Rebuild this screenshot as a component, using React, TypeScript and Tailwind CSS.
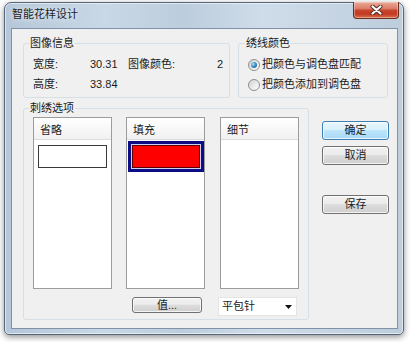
import React from "react";

const FONT = "font-['Liberation_Sans','Noto_Sans_CJK_SC',sans-serif]";

function Button({ label, primary = false, className = "" }: { label: string; primary?: boolean; className?: string }) {
  const skin = primary
    ? "border-[#3c7fb1] bg-[linear-gradient(#eaf6fd_0%,#d9f0fc_45%,#bee6fd_50%,#a7d9f5_100%)]"
    : "border-[#707070] bg-[linear-gradient(#f2f2f2_0%,#ebebeb_45%,#dddddd_50%,#cfcfcf_100%)]";
  return (
    <div
      className={`flex items-center justify-center rounded-[3px] border shadow-[inset_0_0_0_1px_rgba(255,255,255,0.75)] ${skin} ${className}`}
    >
      {label}
    </div>
  );
}

function Radio({ checked = false }: { checked?: boolean }) {
  return (
    <span className="flex h-[12px] w-[12px] shrink-0 items-center justify-center rounded-full border border-[#8f8f8f] bg-[linear-gradient(135deg,#d2d2d2,#ffffff)]">
      {checked && (
        <span className="h-[6px] w-[6px] rounded-full bg-[radial-gradient(circle_at_35%_35%,#b4e4fb_0%,#3d8fc4_45%,#1b4d7a_100%)]" />
      )}
    </span>
  );
}

function ListPanel({ title, children, className = "" }: { title: string; children?: React.ReactNode; className?: string }) {
  return (
    <div className={`flex h-[172px] w-[79px] flex-col border border-[#9c9c9c] bg-white ${className}`}>
      <div className="h-[22px] shrink-0 border-b border-[#dcdcdc] bg-[linear-gradient(#ffffff,#f1f1f1)] pl-[6px] pt-[6px]">
        {title}
      </div>
      {children}
    </div>
  );
}

function CloseButton() {
  return (
    <div className="-mt-[1px] mr-[4px] ml-auto flex h-[17px] w-[46px] items-center justify-center rounded-b-[4px] border border-t-0 border-[#6b2c22] bg-[linear-gradient(#eaa896_0%,#dc806b_40%,#c8452e_52%,#c23a22_75%,#d9714f_100%)] shadow-[inset_0_0_0_1px_rgba(255,255,255,0.35)]">
      <svg width="13" height="10" viewBox="0 0 13 10">
        <path d="M2.5 1.5 L10.5 8.5 M10.5 1.5 L2.5 8.5" stroke="#4a2a24" strokeWidth="4" strokeLinecap="round" />
        <path d="M2.5 1.5 L10.5 8.5 M10.5 1.5 L2.5 8.5" stroke="#ffffff" strokeWidth="2.2" strokeLinecap="round" />
      </svg>
    </div>
  );
}

export default function App() {
  return (
    <div className={`${FONT} h-[342px] w-[414px] overflow-hidden bg-white pt-[2px] text-[11px] leading-[13px] text-[#1b1b1b]`}>
      {/* window frame */}
      <div className="ml-[4px] flex h-[333px] w-[400px] flex-col rounded-t-[7px] rounded-b-[5px] border border-[#56667a] bg-[linear-gradient(90deg,#b4c6d8_0%,#c9d8e6_25%,#bccddd_45%,#cfdcea_65%,#bdcddc_100%)] shadow-[0_2px_6px_rgba(0,0,0,0.45),inset_0_0_0_1px_rgba(255,255,255,0.55)]">
        {/* title bar */}
        <div className="flex h-[25px] shrink-0 items-start pl-[7px]">
          <span className="pt-[5px] text-[#1e1e1e] [text-shadow:0_0_6px_#ffffff]">智能花样设计</span>
          <CloseButton />
        </div>

        {/* client area */}
        <div className="ml-[6px] h-[301px] w-[387px] border border-[#7f92a7] bg-[#f0f0f0] pl-[11px] pt-[8px]">
          <div className="flex gap-[8px]">
            <fieldset className="h-[61px] w-[207px] min-w-0 rounded-[3px] border border-[#d5dfe5]">
              <legend className="ml-[5px] px-[1px] leading-[13px]">图像信息</legend>
              <div className="flex flex-col gap-[7px] pl-[9px] pt-[8px]">
                <div className="flex">
                  <span className="w-[57px]">宽度:</span>
                  <span className="w-[38px]">30.31</span>
                  <span className="flex w-[95px] justify-between">
                    <span>图像颜色:</span>
                    <span>2</span>
                  </span>
                </div>
                <div className="flex">
                  <span className="w-[57px]">高度:</span>
                  <span className="w-[38px]">33.84</span>
                </div>
              </div>
            </fieldset>

            <fieldset className="h-[61px] w-[150px] min-w-0 rounded-[3px] border border-[#d5dfe5]">
              <legend className="ml-[6px] px-[1px] leading-[13px]">绣线颜色</legend>
              <div className="flex flex-col gap-[7px] pl-[9px] pt-[8px]">
                <label className="flex items-center gap-[2px]">
                  <Radio checked />
                  <span>把颜色与调色盘匹配</span>
                </label>
                <label className="flex items-center gap-[2px]">
                  <Radio />
                  <span>把颜色添加到调色盘</span>
                </label>
              </div>
            </fieldset>
          </div>

          <div className="mt-[4px] flex">
            <fieldset className="h-[218px] w-[286px] min-w-0 rounded-[3px] border border-[#d5dfe5]">
              <legend className="ml-[5px] px-[1px] leading-[13px]">刺绣选项</legend>
              <div className="pl-[9px] pt-[2px]">
                <div className="flex">
                  <ListPanel title="省略">
                    <div className="mt-[5px] ml-[4px] h-[23px] w-[69px] border border-[#3a3a3a] bg-white" />
                  </ListPanel>
                  <ListPanel title="填充" className="ml-[14px]">
                    <div className="mt-[1px] ml-[1px] h-[31px] w-[76px] border-[3px] border-[#0c0c84] bg-[#cfcff2] p-[1px]">
                      <div className="h-full w-full border border-[#5a0000] bg-[#ff0000]" />
                    </div>
                  </ListPanel>
                  <ListPanel title="细节" className="ml-[15px]" />
                </div>
                <div className="mt-[8px] flex items-start">
                  <Button label="值..." className="ml-[99px] h-[16px] w-[70px]" />
                  <div className="ml-[16px] flex h-[19px] w-[79px] items-center justify-between border border-[#e4e4e4] bg-white pr-[4px] pl-[3px]">
                    <span>平包针</span>
                    <svg width="7" height="4" viewBox="0 0 7 4">
                      <path d="M0 0 H7 L3.5 4 Z" fill="#111111" />
                    </svg>
                  </div>
                </div>
              </div>
            </fieldset>

            <div className="ml-[13px] flex flex-col pt-[19px]">
              <Button label="确定" primary className="h-[19px] w-[67px]" />
              <Button label="取消" className="mt-[6px] h-[19px] w-[67px]" />
              <Button label="保存" className="mt-[30px] h-[19px] w-[67px]" />
            </div>
          </div>
        </div>
      </div>
    </div>
  );
}
